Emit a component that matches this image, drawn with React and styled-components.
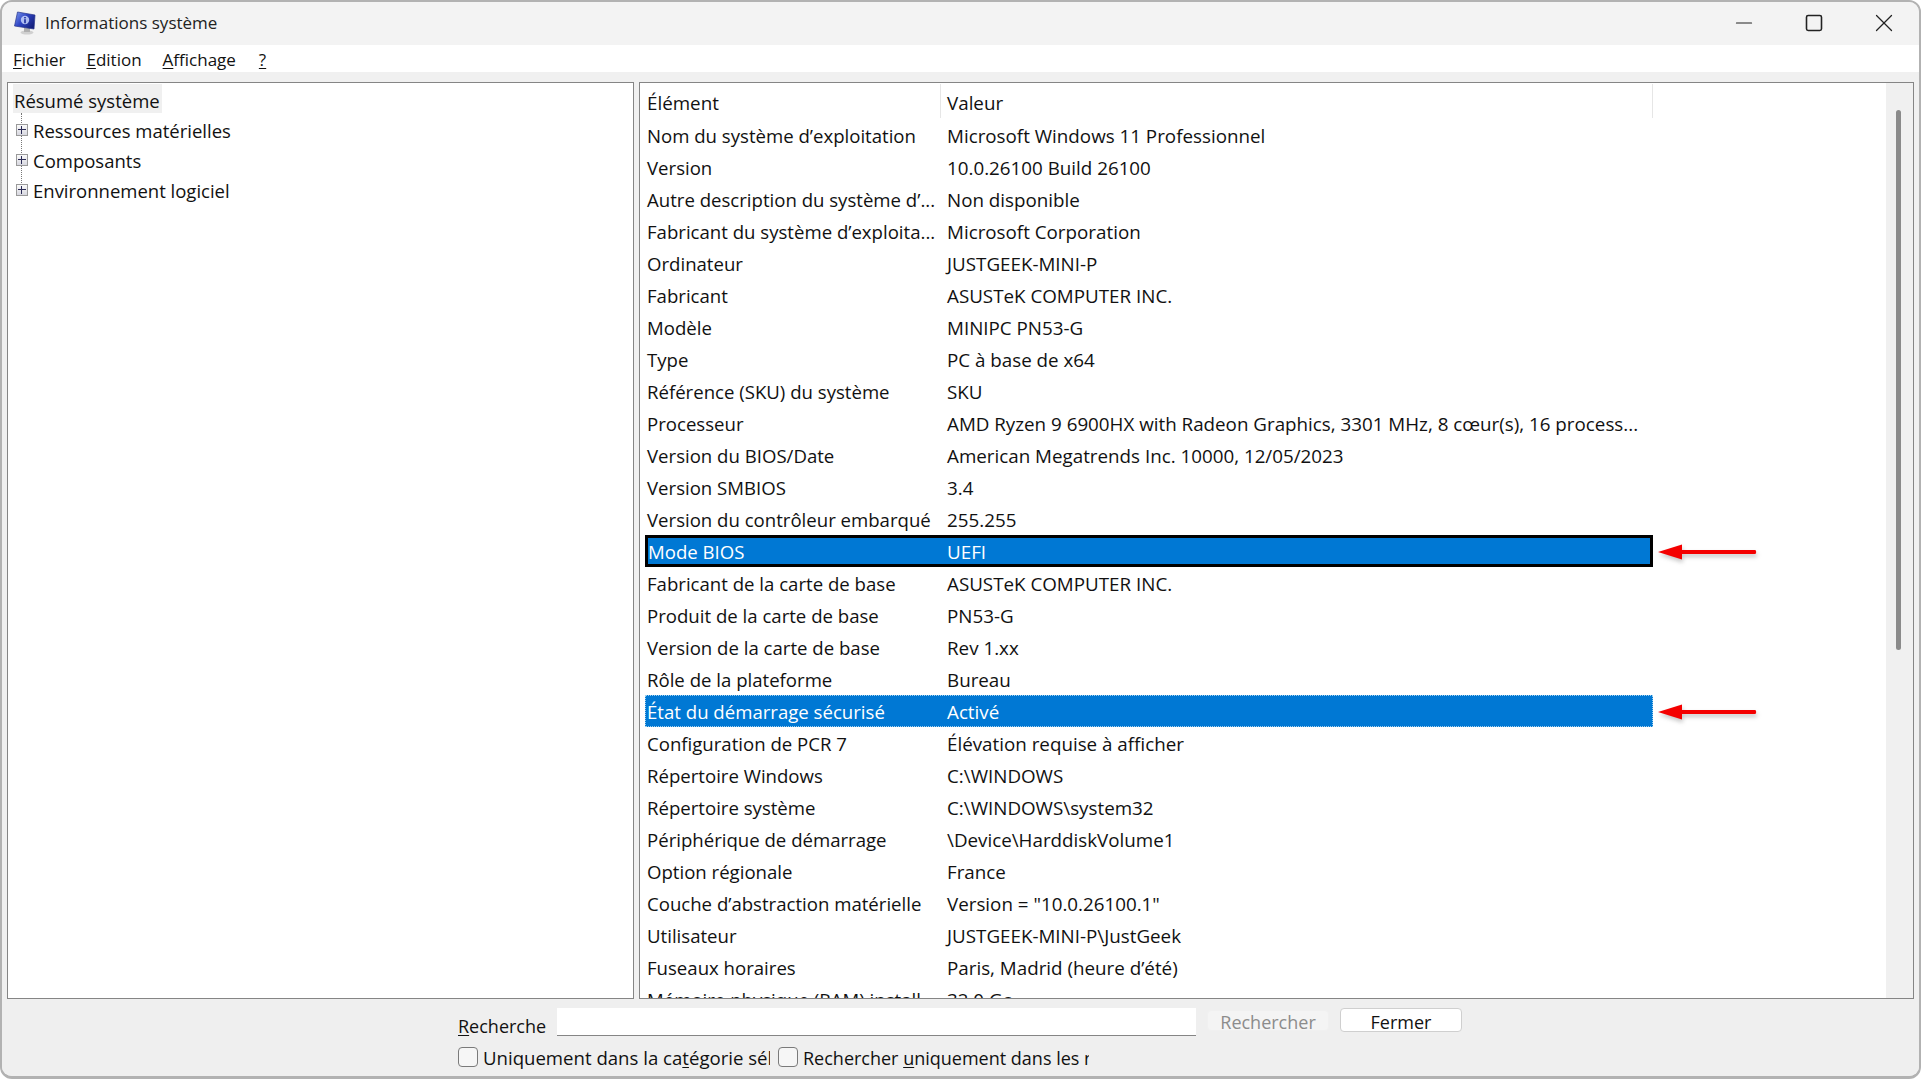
import React from 'react';
import styled, { createGlobalStyle } from 'styled-components';
import { Minus, Square, X } from 'lucide-react';

const GlobalStyle = createGlobalStyle`
  html, body, #root {
    margin: 0;
    height: 100%;
    background: #fff;
  }
  body {
    font-family: "Open Sans", "Noto Sans", "Liberation Sans", sans-serif;
    color: #111;
    overflow: hidden;
  }
`;

const Window = styled.div`
  box-sizing: border-box;
  height: 100vh;
  display: flex;
  flex-direction: column;
  background: #f0f0f0;
  border: 2px solid #b2b2b2;
  border-bottom-width: 3px;
  border-radius: 12px;
  overflow: hidden;
`;

const TitleBar = styled.div`
  box-sizing: border-box;
  height: 43px;
  flex: none;
  display: flex;
  align-items: center;
  padding: 0 0 2px 12px;
  background: #f3f3f3;
`;

const WindowTitle = styled.span`
  margin-left: 9px;
  font-size: 17px;
  color: #222;
`;

const WindowControls = styled.div`
  margin-left: auto;
  display: flex;
  align-items: center;
`;

const ControlButton = styled.span`
  width: 70px;
  display: flex;
  justify-content: center;
  align-items: center;
  color: #222;
`;

const MenuBar = styled.div`
  box-sizing: border-box;
  height: 27px;
  flex: none;
  display: flex;
  align-items: center;
  gap: 21px;
  padding: 2px 0 0 11px;
  background: #fff;
  font-size: 17px;
`;

const MenuItem = styled.span`
  line-height: 25px;
  &:last-child {
    margin-left: 2px;
  }
`;

const Panes = styled.div`
  flex: 1;
  min-height: 0;
  display: flex;
  gap: 5px;
  margin-top: 10px;
  padding: 0 5px;
`;

const TreePane = styled.div`
  box-sizing: border-box;
  width: 627px;
  flex: none;
  padding: 1px 0 0 5px;
  background: #fff;
  border: 1px solid #858585;
  font-size: 18.5px;
`;

const RootItem = styled.div`
  width: fit-content;
  height: 29px;
  line-height: 33px;
  padding: 0 2px 0 1px;
  background: #f0f0f0;
`;

const TreeBranches = styled.div`
  position: relative;
  padding-top: 2px;
  &::before {
    content: "";
    position: absolute;
    left: 8px;
    top: 0;
    height: 72px;
    border-left: 1px dotted #777;
  }
`;

const TreeItem = styled.div`
  height: 30px;
  display: flex;
  align-items: center;
  gap: 5px;
  padding-left: 3px;
`;

const Expander = styled.span`
  position: relative;
  z-index: 1;
  box-sizing: border-box;
  width: 12px;
  height: 12px;
  border: 1px solid #9a9a9a;
  background: linear-gradient(#fafafa, #d8d8e0);
  &::before {
    content: "";
    position: absolute;
    left: 1px;
    right: 1px;
    top: 4px;
    height: 1px;
    background: #2b2b55;
  }
  &::after {
    content: "";
    position: absolute;
    top: 1px;
    bottom: 1px;
    left: 4px;
    width: 1px;
    background: #2b2b55;
  }
`;

const ListPane = styled.div`
  box-sizing: border-box;
  flex: 1;
  min-width: 0;
  display: flex;
  background: #fff;
  border: 1px solid #858585;
`;

const ListBody = styled.div`
  flex: 1;
  min-width: 0;
  overflow: hidden;
  padding-left: 5px;
  font-size: 18.8px;
`;

const HeaderRow = styled.div`
  height: 36px;
  display: flex;
  align-items: center;
`;

const HeaderCell = styled.div`
  box-sizing: border-box;
  width: ${(p) => p.$width}px;
  height: 34px;
  line-height: 38px;
  padding-left: ${(p) => p.$pad}px;
  border-right: 1px solid #e6e6e6;
`;

const Row = styled.div`
  height: 32px;
  display: flex;
  align-items: center;
`;

const RowBody = styled.div`
  box-sizing: border-box;
  width: 1008px;
  height: 32px;
  flex: none;
  display: flex;
  align-items: center;
  background: ${(p) => (p.$selected ? '#0078d4' : 'transparent')};
  color: ${(p) => (p.$selected ? '#fff' : '#111')};
  border: ${(p) =>
    p.$focus === 'solid' ? '3px solid #000' : p.$focus === 'dotted' ? '1px dotted #9fd0ee' : '0 solid transparent'};
`;

const Cell = styled.div`
  width: ${(p) => p.$width}px;
  flex: none;
  padding: 2px 0 0 ${(p) => p.$pad}px;
  box-sizing: border-box;
  white-space: nowrap;
  overflow: hidden;
`;

const NameCell = styled(Cell)`
  padding-top: 0;
  font-size: 18.6px;
`;

const ArrowMark = styled.svg`
  flex: none;
  margin-left: 4px;
  margin-top: 1px;
  filter: drop-shadow(1px 3px 2px rgba(90, 90, 90, 0.35));
`;

const ScrollTrack = styled.div`
  width: 27px;
  flex: none;
  background: #f0f0f0;
  padding-top: 27px;
  display: flex;
  justify-content: center;
`;

const ScrollThumb = styled.div`
  width: 5px;
  height: 540px;
  margin-right: 2px;
  border-radius: 3px;
  background: #8a8a8a;
`;

const Footer = styled.div`
  height: 77px;
  flex: none;
  box-sizing: border-box;
  padding: 9px 0 0 456px;
  background: #efefef;
  font-size: 18px;
`;

const SearchRow = styled.div`
  height: 28px;
  display: flex;
  align-items: flex-start;
`;

const SearchLabel = styled.label`
  width: 89px;
  flex: none;
  height: 28px;
  line-height: 36px;
  overflow: hidden;
  white-space: nowrap;
`;

const SearchField = styled.div`
  box-sizing: border-box;
  width: 639px;
  height: 28px;
  margin-left: 10px;
  flex: none;
  background: #fff;
  border-bottom: 1px solid #858585;
`;

const FooterButton = styled.div`
  box-sizing: border-box;
  width: 122px;
  height: ${(p) => (p.$disabled ? 21 : 24)}px;
  margin-top: ${(p) => (p.$disabled ? 2 : 0)}px;
  margin-left: 11px;
  flex: none;
  overflow: hidden;
  text-align: center;
  line-height: ${(p) => (p.$disabled ? 23 : 27)}px;
  border-radius: 4px;
  background: ${(p) => (p.$disabled ? '#f4f4f4' : '#fff')};
  border: 1px solid ${(p) => (p.$disabled ? '#f0f0f0' : '#cfcfcf')};
  color: ${(p) => (p.$disabled ? '#8c8c8c' : '#111')};
`;

const OptionsRow = styled.div`
  margin-top: 10px;
  height: 22px;
  display: flex;
  align-items: center;
`;

const CheckBox = styled.span`
  box-sizing: border-box;
  width: 20px;
  height: 20px;
  flex: none;
  border: 1px solid #7a7a7a;
  border-radius: 4px;
  background: #f6f6f6;
`;

const OptionLabel = styled.span`
  width: ${(p) => p.$width}px;
  flex: none;
  margin: 2px 8px 0 5px;
  overflow: hidden;
  white-space: nowrap;
  line-height: 24px;
  font-size: ${(p) => p.$size}px;
`;

const Accel = styled.u`
  text-underline-offset: 2px;
`;

const rows = [
  ['Nom du système d’exploitation', 'Microsoft Windows 11 Professionnel'],
  ['Version', '10.0.26100 Build 26100'],
  ['Autre description du système d’...', 'Non disponible'],
  ['Fabricant du système d’exploita...', 'Microsoft Corporation'],
  ['Ordinateur', 'JUSTGEEK-MINI-P'],
  ['Fabricant', 'ASUSTeK COMPUTER INC.'],
  ['Modèle', 'MINIPC PN53-G'],
  ['Type', 'PC à base de x64'],
  ['Référence (SKU) du système', 'SKU'],
  ['Processeur', 'AMD Ryzen 9 6900HX with Radeon Graphics, 3301 MHz, 8 cœur(s), 16 process...'],
  ['Version du BIOS/Date', 'American Megatrends Inc. 10000, 12/05/2023'],
  ['Version SMBIOS', '3.4'],
  ['Version du contrôleur embarqué', '255.255'],
  ['Mode BIOS', 'UEFI', 'solid'],
  ['Fabricant de la carte de base', 'ASUSTeK COMPUTER INC.'],
  ['Produit de la carte de base', 'PN53-G'],
  ['Version de la carte de base', 'Rev 1.xx'],
  ['Rôle de la plateforme', 'Bureau'],
  ['État du démarrage sécurisé', 'Activé', 'dotted'],
  ['Configuration de PCR 7', 'Élévation requise à afficher'],
  ['Répertoire Windows', 'C:\\WINDOWS'],
  ['Répertoire système', 'C:\\WINDOWS\\system32'],
  ['Périphérique de démarrage', '\\Device\\HarddiskVolume1'],
  ['Option régionale', 'France'],
  ['Couche d’abstraction matérielle', 'Version = "10.0.26100.1"'],
  ['Utilisateur', 'JUSTGEEK-MINI-P\\JustGeek'],
  ['Fuseaux horaires', 'Paris, Madrid (heure d’été)'],
  ['Mémoire physique (RAM) install...', '32,0 Go'],
];

// little monitor with the blue "i" screen, as in the msinfo32 title bar
const AppIcon = () => (
  <svg width="22" height="24" viewBox="0 0 22 24">
    <defs>
      <linearGradient id="screen" x1="0" y1="0" x2="1" y2="0.7">
        <stop offset="0" stopColor="#7f9cf0" />
        <stop offset="0.5" stopColor="#2f45c4" />
        <stop offset="1" stopColor="#14207c" />
      </linearGradient>
    </defs>
    <ellipse cx="13" cy="21.5" rx="6.5" ry="2" fill="#d0d0d0" />
    <path d="M10 16 L16 17 L16 21 L10 21 Z" fill="#b0b0b0" />
    <path d="M3.5 1 L21 4 L20 18 L0.5 15 Z" fill="url(#screen)" stroke="#26348a" strokeWidth="0.7" />
    <circle cx="11" cy="9" r="4.2" fill="#cfdcff" opacity="0.8" />
    <rect x="10.2" y="8.2" width="1.6" height="4" fill="#1c2c9c" />
    <rect x="10.2" y="6" width="1.6" height="1.4" fill="#1c2c9c" />
  </svg>
);

const RedArrow = () => (
  <ArrowMark width="100" height="18" viewBox="0 0 100 18">
    <path d="M1 9 L25 1.5 L25 7 L98.5 7 Q100 9 98.5 11 L25 11 L25 16.5 Z" fill="#f40000" />
  </ArrowMark>
);

const App = () => {
  return (
    <>
      <GlobalStyle />
      <Window>
        <TitleBar>
          <AppIcon />
          <WindowTitle>Informations système</WindowTitle>
          <WindowControls>
            <ControlButton><Minus size={26} strokeWidth={1} /></ControlButton>
            <ControlButton><Square size={20} strokeWidth={1.9} /></ControlButton>
            <ControlButton><X size={30} strokeWidth={1} /></ControlButton>
          </WindowControls>
        </TitleBar>

        <MenuBar>
          <MenuItem><Accel>F</Accel>ichier</MenuItem>
          <MenuItem><Accel>E</Accel>dition</MenuItem>
          <MenuItem><Accel>A</Accel>ffichage</MenuItem>
          <MenuItem><Accel>?</Accel></MenuItem>
        </MenuBar>

        <Panes>
          <TreePane>
            <RootItem>Résumé système</RootItem>
            <TreeBranches>
              <TreeItem><Expander />Ressources matérielles</TreeItem>
              <TreeItem><Expander />Composants</TreeItem>
              <TreeItem><Expander />Environnement logiciel</TreeItem>
            </TreeBranches>
          </TreePane>

          <ListPane>
            <ListBody>
              <HeaderRow>
                <HeaderCell $width={296} $pad={2}>Élément</HeaderCell>
                <HeaderCell $width={712} $pad={6}>Valeur</HeaderCell>
              </HeaderRow>
              {rows.map(([name, value, focus], index) => (
                <Row key={index}>
                  <RowBody $selected={!!focus} $focus={focus}>
                    <NameCell $width={focus === 'solid' ? 293 : focus === 'dotted' ? 295 : 296} $pad={focus === 'solid' ? 0 : focus === 'dotted' ? 1 : 2}>{name}</NameCell>
                    <Cell $width={700} $pad={6}>{value}</Cell>
                  </RowBody>
                  {focus && <RedArrow />}
                </Row>
              ))}
            </ListBody>
            <ScrollTrack>
              <ScrollThumb />
            </ScrollTrack>
          </ListPane>
        </Panes>

        <Footer>
          <SearchRow>
            <SearchLabel><Accel>R</Accel>echercher :</SearchLabel>
            <SearchField />
            <FooterButton $disabled>Rechercher</FooterButton>
            <FooterButton>Fermer</FooterButton>
          </SearchRow>
          <OptionsRow>
            <CheckBox />
            <OptionLabel $width={287} $size={18.6}>Uniquement dans la ca<Accel>t</Accel>égorie sélectionnée</OptionLabel>
            <CheckBox />
            <OptionLabel $width={286} $size={18}>Rechercher <Accel>u</Accel>niquement dans les noms</OptionLabel>
          </OptionsRow>
        </Footer>
      </Window>
    </>
  );
};

export default App;
